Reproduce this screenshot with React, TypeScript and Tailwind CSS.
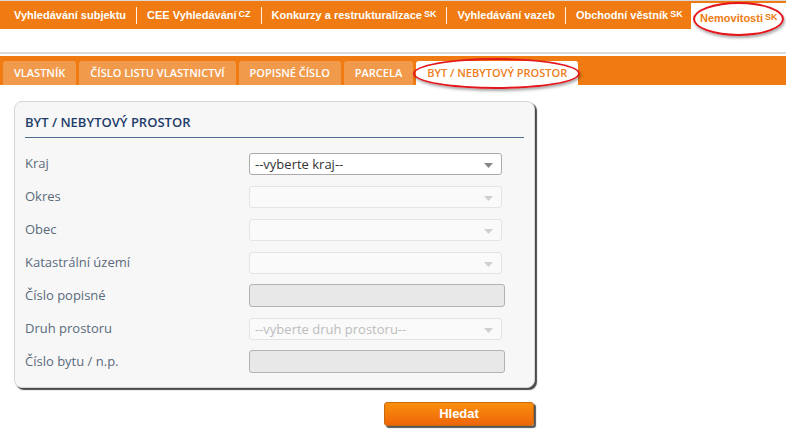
import React from "react";

const topItems = [
  { label: "Vyhledávání subjektu", sup: "" },
  { label: "CEE Vyhledávání", sup: "CZ" },
  { label: "Konkurzy a restrukturalizace", sup: "SK" },
  { label: "Vyhledávání vazeb", sup: "" },
  { label: "Obchodní věstník", sup: "SK" },
];

const subTabs = ["VLASTNÍK", "ČÍSLO LISTU VLASTNICTVÍ", "POPISNÉ ČÍSLO", "PARCELA"];

function Arrow({ light }: { light?: boolean }) {
  return (
    <svg width="9" height="5" viewBox="0 0 9 5" className="absolute right-[8px] top-[9px]">
      <path d="M0 0h9L4.5 5z" fill={light ? "#cfcfcf" : "#888"} />
    </svg>
  );
}

function Select({ text, enabled }: { text?: string; enabled?: boolean }) {
  return (
    <div
      className={
        enabled
          ? "relative w-[253px] h-[22px] border border-[#aaa] rounded-[3px] bg-white px-[5px] text-[13px] leading-[20px] text-[#333]"
          : "relative w-[253px] h-[22px] border border-[#e4e4e4] rounded-[3px] bg-[#fafafa] px-[5px] text-[13px] leading-[20px] text-[#bdbdbd]"
      }
    >
      {text}
      <Arrow light={!enabled} />
    </div>
  );
}

function Input() {
  return <div className="w-[256px] h-[23px] border border-[#b3b3b3] rounded-[3px] bg-[#e8e8e8]" />;
}

function Row({ label, children }: { label: string; children: React.ReactNode }) {
  return (
    <div className="flex flex-row items-center h-[23px]">
      <div className="w-[224px] text-[13px] text-[#5a6b7c]">{label}</div>
      {children}
    </div>
  );
}

export default function App() {
  return (
    <div className="relative w-[786px] h-[429px] bg-white overflow-hidden" style={{ fontFamily: '"Open Sans", sans-serif' }}>
      {/* top menu */}
      <div className="h-[29px] bg-[#ef7b12] border-t border-[#d9d9d9] flex flex-row items-stretch" style={{ fontFamily: '"Liberation Sans", Arial, sans-serif' }}>
        <div className="flex flex-row items-center pl-[4px] min-w-0">
          {topItems.map((it, i) => (
            <div key={it.label} className="flex flex-row items-center">
              {i > 0 && <div className="w-px h-[17px] bg-white/90" />}
              <div
                className={
                  i === topItems.length - 1
                    ? "pl-[10px] pr-[2px] text-[11px] font-bold text-white whitespace-nowrap"
                    : "pl-[10px] pr-[10px] text-[11px] font-bold text-white whitespace-nowrap"
                }
              >
                {it.label}
                {it.sup && <sup className="text-[9px] ml-[2px] relative -top-[2px]">{it.sup}</sup>}
              </div>
            </div>
          ))}
        </div>
        <div className="ml-auto shrink-0 mt-[2px] w-[95px] bg-white pl-[9px] pt-[7px] text-[11px] font-bold text-[#ef7b12] whitespace-nowrap">
          Nemovitosti<sup className="text-[9px] ml-[2px] relative -top-[2px]">SK</sup>
        </div>
      </div>

      <div className="h-[23px]" />
      <div className="h-[2px] bg-[#dcdcdc]" />
      <div className="h-[2px]" />

      {/* sub tabs */}
      <div className="h-[29px] bg-[#ef7b12] flex flex-row items-end gap-[3px] pl-[3px]">
        {subTabs.map((t) => (
          <div key={t} className="h-[24px] px-[11px] rounded-t-[3px] bg-[#f29a4c] text-white text-[11px] font-semibold flex items-center whitespace-nowrap">
            {t}
          </div>
        ))}
        <div className="h-[24px] w-[162px] rounded-t-[3px] bg-white text-[#f07d20] text-[11px] font-semibold flex items-center pl-[11px] whitespace-nowrap">
          BYT / NEBYTOVÝ PROSTOR
        </div>
      </div>

      {/* form card */}
      <div className="ml-[14px] mt-[16px] w-[521px] flex flex-col">
        <div className="border border-[#d6d6d6] rounded-[8px] bg-[#f7f7f7] shadow-[2px_2px_1px_#4a4a4a] px-[10px] pt-[12px] pb-[14px]">
          <div className="text-[13px] font-semibold text-[#1e3d6a] leading-[17px] pb-[6px] border-b border-[#4d6d8e]">
            BYT / NEBYTOVÝ PROSTOR
          </div>
          <div className="flex flex-col gap-[10px] mt-[14px]">
            <Row label="Kraj">
              <Select enabled text="--vyberte kraj--" />
            </Row>
            <Row label="Okres">
              <Select />
            </Row>
            <Row label="Obec">
              <Select />
            </Row>
            <Row label="Katastrální území">
              <Select />
            </Row>
            <Row label="Číslo popisné">
              <Input />
            </Row>
            <Row label="Druh prostoru">
              <Select text="--vyberte druh prostoru--" />
            </Row>
            <Row label="Číslo bytu / n.p.">
              <Input />
            </Row>
          </div>
        </div>
        <div className="flex flex-row justify-end mt-[14px] pr-[1px]">
          <div
            className="w-[150px] h-[24px] rounded-[3px] bg-gradient-to-b from-[#f98f0b] to-[#ee650a] border border-[#c86a10] shadow-[2px_2px_1px_#555] flex items-center justify-center text-white text-[13px] font-bold"
            style={{ fontFamily: '"Liberation Sans", Arial, sans-serif' }}
          >
            Hledat
          </div>
        </div>
      </div>

      {/* red annotation ellipses */}
      <div className="absolute left-[693px] top-[2px] w-[91px] h-[34px] rounded-[50%] border-2 border-[#e3161b] shadow-[1px_2px_3px_rgba(0,0,0,0.35)]" />
      <div className="absolute left-[413px] top-[58px] w-[167px] h-[31px] rounded-[50%] border-2 border-[#e3161b] shadow-[1px_2px_3px_rgba(0,0,0,0.35)]" />
    </div>
  );
}
